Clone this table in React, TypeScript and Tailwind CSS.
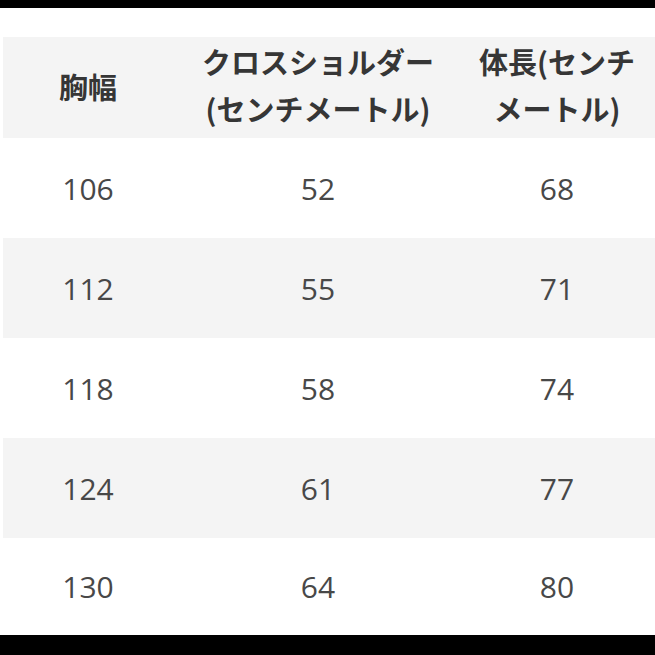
import React from "react";

// Size chart: chest / cross shoulder / body length (cm)
const rows = [
  { chest: "106", shoulder: "52", length: "68" },
  { chest: "112", shoulder: "55", length: "71" },
  { chest: "118", shoulder: "58", length: "74" },
  { chest: "124", shoulder: "61", length: "77" },
  { chest: "130", shoulder: "64", length: "80" },
];

const cols = "grid grid-cols-[170px_290px_1fr] items-center";

export default function App() {
  return (
    <div className="flex h-[655px] w-[655px] flex-col overflow-hidden bg-white">
      <div className="h-[8px] shrink-0 bg-black" />
      <div className="h-[29px] shrink-0" />

      <div className="flex flex-1 flex-col pl-[3px]">
        {/* Header */}
        <div
          className={`${cols} h-[101px] shrink-0 bg-[#f4f4f4] pb-[6px] text-center text-[29px] font-bold leading-[47px] text-[#363636]`}
          style={{ fontFamily: '"Noto Sans CJK JP", "Noto Sans", sans-serif' }}
        >
          <div className="pt-[4px]">胸幅</div>
          <div>
            <div>クロスショルダー</div>
            <div>(センチメートル)</div>
          </div>
          <div className="pr-[4px]">
            <div>体長(センチ</div>
            <div>メートル)</div>
          </div>
        </div>

        {/* Body */}
        {rows.map((r, i) => (
          <div
            key={r.chest}
            className={`${cols} shrink-0 text-center text-[30px] text-[#484848] ${
              i % 2 === 1 ? "bg-[#f4f4f4]" : "bg-white"
            } ${i === rows.length - 1 ? "h-[97px]" : "h-[100px]"}`}
            style={{ fontFamily: '"Open Sans", "Noto Sans", sans-serif' }}
          >
            <div>{r.chest}</div>
            <div>{r.shoulder}</div>
            <div className="pr-[4px]">{r.length}</div>
          </div>
        ))}
      </div>

      <div className="h-[20px] shrink-0 bg-black" />
    </div>
  );
}
